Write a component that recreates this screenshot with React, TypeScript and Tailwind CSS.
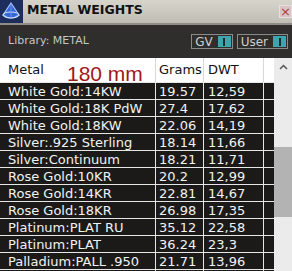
const rows: [string, string, string][] = [
  ["White Gold:14KW", "19.57", "12,59"],
  ["White Gold:18K PdW", "27.4", "17,62"],
  ["White Gold:18KW", "22.06", "14,19"],
  ["Silver:.925 Sterling", "18.14", "11,66"],
  ["Silver:Continuum", "18.21", "11,71"],
  ["Rose Gold:10KR", "20.2", "12,99"],
  ["Rose Gold:14KR", "22.81", "14,67"],
  ["Rose Gold:18KR", "26.98", "17,35"],
  ["Platinum:PLAT RU", "35.12", "22,58"],
  ["Platinum:PLAT", "36.24", "23,3"],
  ["Palladium:PALL .950", "21.71", "13,96"],
  ["", "", ""],
];

function Toggle({ label }: { label: string }) {
  return (
    <div className="flex h-[15px] items-center border border-[#8a8a8a] pl-[3px] pr-[1px] gap-[5px]">
      <span className="text-[12px] leading-none text-[#cfcfcf]">{label}</span>
      <span className="flex h-[11px] w-[13px] items-center justify-center bg-[#3ea5ae]">
        <span className="h-[8px] w-[2px] bg-[#1b2b2e]" />
      </span>
    </div>
  );
}

export default function App() {
  return (
    <div className="relative h-[271px] w-[292px] overflow-hidden bg-[#2f2e2c] font-['DejaVu_Sans',sans-serif]">
      {/* title bar */}
      <div className="flex h-[25px] items-stretch border-b-2 border-[#8e8c84] bg-gradient-to-b from-[#d6d4cb] to-[#c0beb4]">
        <div className="w-[23px] bg-[#1a2a55]">
          <svg width="23" height="23" viewBox="0 0 23 23">
            <rect width="23" height="23" fill="#1d2d5c" />
            <path d="M11 3 L3 15 Q11 21 19 15 Z" fill="#3566d8" stroke="#a8c6ff" strokeWidth="1.2" />
            <ellipse cx="11" cy="15" rx="8" ry="3" fill="none" stroke="#d0e0ff" strokeWidth="1" />
            <path d="M11 3 L11 18" stroke="#7aa0f0" strokeWidth="0.8" />
          </svg>
        </div>
        <div className="flex flex-1 items-start pl-[4px] pt-[1px] text-[12.5px] font-bold text-[#111]">
          METAL WEIGHTS
        </div>
        <div className="flex items-start pt-[5px]">
          <div className="flex h-[13px] w-[13px] items-center justify-center border border-[#e8e0e0] bg-[#d9c4c4] text-[13px] leading-none text-[#b04040]">
            ×
          </div>
        </div>
      </div>

      {/* library line */}
      <div className="flex h-[33px] items-center justify-between pl-[8px] pr-[4px]">
        <span className="text-[11px] text-[#c6c6c6]">Library: METAL</span>
        <div className="flex gap-[4px]">
          <Toggle label="GV" />
          <Toggle label="User" />
        </div>
      </div>

      {/* table */}
      <div className="flex">
        <div className="w-[274px]">
          <div className="grid h-[24px] grid-cols-[156px_48px_60px_10px] bg-white text-[13px] text-[#111]">
            <div className="flex items-center border-r border-[#d8d8d8] pl-[8px]">Metal</div>
            <div className="flex items-center border-r border-[#d8d8d8] pl-[3px]">Grams</div>
            <div className="flex items-center border-r border-[#d8d8d8] pl-[4px]">DWT</div>
            <div />
          </div>
          {rows.map(([m, g, d], i) => (
            <div
              key={i}
              className="grid h-[17px] grid-cols-[156px_48px_60px_10px] border-t border-[#e6e6e6] bg-[#1c1a18] text-[13px] leading-none text-[#f2f2f2]"
            >
              <div className="flex items-center border-r border-[#e6e6e6] pl-[8px]">{m}</div>
              <div className="flex items-center border-r border-[#e6e6e6] pl-[3px]">{g}</div>
              <div className="flex items-center border-r border-[#e6e6e6] pl-[4px]">{d}</div>
              <div />
            </div>
          ))}
        </div>
        {/* scrollbar */}
        <div className="flex w-[18px] flex-col bg-[#ebebeb]">
          <div className="flex h-[17px] items-center justify-center">
            <svg width="9" height="6" viewBox="0 0 9 6">
              <path d="M1 5 L4.5 1.5 L8 5" fill="none" stroke="#555" strokeWidth="1.5" />
            </svg>
          </div>
          <div className="h-[72px]" />
          <div className="h-[70px] bg-[#b3b3b3]" />
          <div className="flex-1" />
          <div className="flex h-[16px] items-start justify-center pt-[3px]">
            <svg width="9" height="6" viewBox="0 0 9 6">
              <path d="M1 1 L4.5 4.5 L8 1" fill="none" stroke="#555" strokeWidth="1.5" />
            </svg>
          </div>
        </div>
      </div>

      {/* annotation */}
      <div className="absolute left-[67px] top-[66px] font-['Liberation_Sans',sans-serif] text-[21px] leading-[16px] text-[#a3161a]">
        180 mm
      </div>
    </div>
  );
}
